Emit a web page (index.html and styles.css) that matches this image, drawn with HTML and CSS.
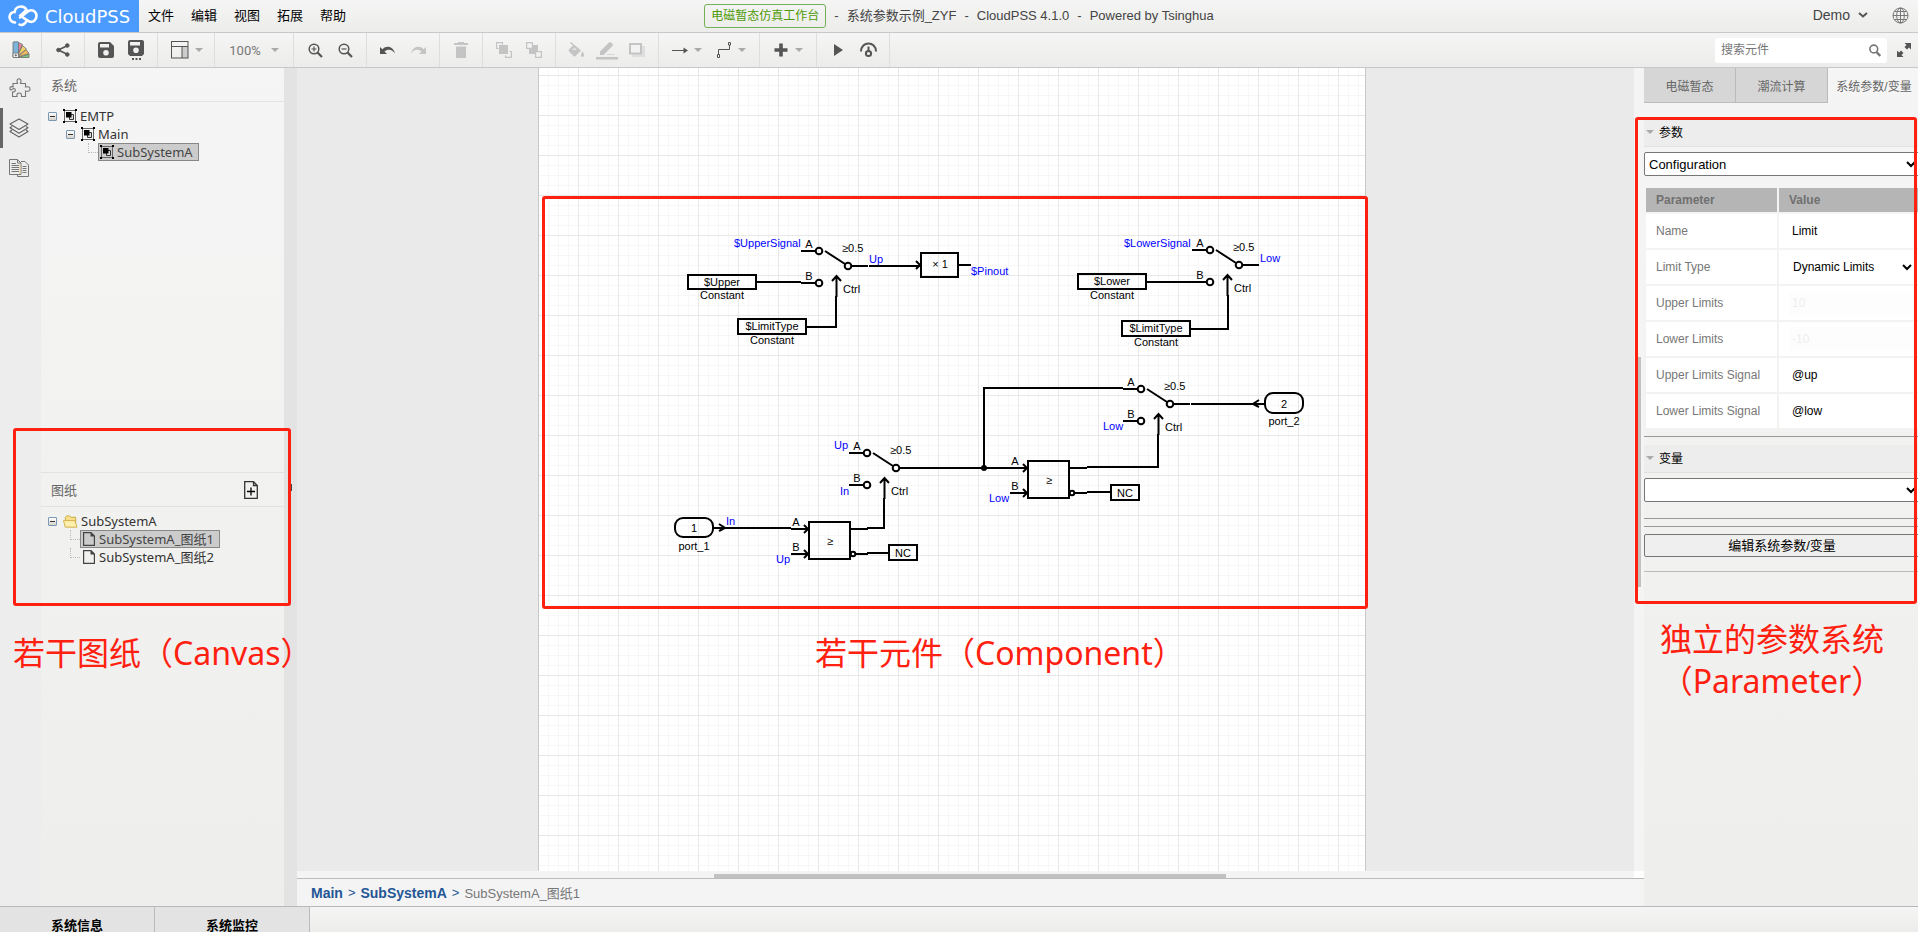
FILE: index.html
```html
<!DOCTYPE html>
<html lang="zh-CN">
<head>
<meta charset="utf-8">
<title>系统参数示例_ZYF - CloudPSS</title>
<link rel="stylesheet" href="styles.css">
</head>
<body>
<header class="titlebar">
  <div class="titlebar-left">
    <a class="logo" href="#">
      <svg width="30" height="22" viewBox="0 0 30 22" fill="none" stroke="#fff" stroke-width="2.6" stroke-linecap="round"><path d="M7 17.5C3.500 17.200 1.500 14.500 1.500 11.800C1.500 8.800 4 6.800 6.600 7C7 3.800 9.800 1.500 13 1.500C15.600 1.500 17.600 3 18.600 5L12.500 10.500L19 15.500C17 19.500 13.500 20.800 11.500 19.500"/><path d="M12 12.500L20.500 6C25 3.800 28.600 7.200 28.500 11C28.400 15 25 17.600 21.500 16.600L18.500 15"/></svg>
      <span>CloudPSS</span>
    </a>
    <nav class="menu">
      <button>文件</button><button>编辑</button><button>视图</button><button>拓展</button><button>帮助</button>
    </nav>
  </div>
  <div class="title">
    <span class="badge">电磁暂态仿真工作台</span>
    <span>-</span><span>系统参数示例_ZYF</span><span>-</span><span>CloudPSS 4.1.0</span><span>-</span><span>Powered by Tsinghua</span>
  </div>
  <div class="account">
    <button class="user">Demo
      <svg width="10" height="6" viewBox="0 0 10 6" fill="none" stroke="#555" stroke-width="2"><path d="M1 1L5 4.500L9 1"/></svg>
    </button>
    <button aria-label="语言">
      <svg width="17" height="17" viewBox="0 0 17 17" fill="none" stroke="#777" stroke-width="1"><circle cx="8.500" cy="8.500" r="7.500"/><ellipse cx="8.500" cy="8.500" rx="3.800" ry="7.500"/><path d="M8.500 1V16M1 8.500H16M2.500 4.500H14.500M2.500 12.500H14.500"/></svg>
    </button>
  </div>
</header>

<div class="toolbar">
  <div class="group">
    <button aria-label="主题"><svg width="18" height="18" viewBox="0 0 18 18" stroke="#6d6d6d" stroke-width=".8"><path d="M6 16.500L17 13V16.500Z" fill="#7fc77a"/><path d="M6 16L14 8.500L17 12.500Z" fill="#f3b95f"/><path d="M5.500 15L10.500 4.500L14.500 8Z" fill="#f2d06a"/><path d="M5.500 14V1L10.500 3.500Z" fill="#e8849b"/><rect x="1" y=".8" width="5.500" height="15.700" rx="1" fill="#7db4dc"/><path d="M1 12H6.500V16.500H1Z" fill="#eee"/><circle cx="3.800" cy="14.300" r=".7" fill="#555"/></svg></button>
  </div>
  <div class="group">
    <button aria-label="分享"><svg width="14" height="14" viewBox="0 0 14 14" fill="#555" stroke="#555"><path d="M11.500 2.500L2.500 7L11.500 11.500" fill="none" stroke-width="1.600"/><circle cx="11.300" cy="2.500" r="1.800"/><circle cx="2.500" cy="7" r="1.800"/><circle cx="11.300" cy="11.500" r="1.800"/></svg></button>
  </div>
  <div class="group">
    <button aria-label="保存"><svg width="16" height="16" viewBox="0 0 16 16"><path fill="#555" fill-rule="evenodd" d="M2 0H12L16 4V14Q16 16 14 16H2Q0 16 0 14V2Q0 0 2 0ZM2 2V5.500H11V2ZM8 8A2.800 2.800 0 1 0 8 13.600A2.800 2.800 0 1 0 8 8Z"/></svg></button>
    <button aria-label="另存为"><svg width="16" height="20" viewBox="0 0 16 20"><path fill="#555" fill-rule="evenodd" d="M2 0H14Q16 0 16 2V14L14 16H2L0 14V2Q0 0 2 0ZM2 2V5.500H12V2ZM8 7.500A2.800 2.800 0 1 0 8 13.100A2.800 2.800 0 1 0 8 7.500Z"/><path fill="#555" d="M4 18H6V20H4ZM7.500 18H9.500V20H7.500ZM11 18H13V20H11Z"/></svg></button>
  </div>
  <div class="group">
    <button class="drop" aria-label="布局"><svg width="18" height="18" viewBox="0 0 18 18" fill="none" stroke="#555"><path fill="#ccc" stroke="none" d="M11 6H17V17H11Z"/><rect x=".5" y=".5" width="16.500" height="16.500"/><path d="M1 5.500H17M11 5.500V17"/></svg><i class="caret"></i></button>
  </div>
  <div class="group">
    <button class="zoom">100%<i class="caret"></i></button>
  </div>
  <div class="group">
    <button aria-label="放大"><svg width="15" height="15" viewBox="0 0 15 15" fill="none" stroke="#555" stroke-width="1.500"><circle cx="6" cy="6" r="4.800"/><path d="M9.500 9.500L14 14" stroke-width="2.200"/><path d="M3.500 6H8.500M6 3.500V8.500" stroke-width="1.200"/></svg></button>
    <button aria-label="缩小"><svg width="15" height="15" viewBox="0 0 15 15" fill="none" stroke="#555" stroke-width="1.500"><circle cx="6" cy="6" r="4.800"/><path d="M9.500 9.500L14 14" stroke-width="2.200"/><path d="M3.500 6H8.500" stroke-width="1.200"/></svg></button>
  </div>
  <div class="group">
    <button aria-label="撤销"><svg width="16" height="9" viewBox="0 0 16 9"><path fill="#555" d="M0 1V8H7L4.500 5.500C8 2.500 12.500 3.500 15 7.500C13.500 1 7 -1.500 2.300 3.300Z"/></svg></button>
    <button aria-label="重做"><svg width="16" height="9" viewBox="0 0 16 9"><path fill="#c4c4c4" d="M16 1V8H9L11.500 5.500C8 2.500 3.500 3.500 1 7.500C2.500 1 9 -1.500 13.700 3.300Z"/></svg></button>
  </div>
  <div class="group">
    <button aria-label="删除"><svg width="14" height="16" viewBox="0 0 14 16" fill="#c4c4c4"><path d="M0 1H4V0H10V1H14V3H0ZM2 4.500H12V16H2Z"/></svg></button>
  </div>
  <div class="group">
    <button aria-label="置于顶层"><svg width="16" height="16" viewBox="0 0 16 16" fill="none" stroke="#c4c4c4" stroke-width="1.200"><path d="M2.500 6.500H.600V.600H6.500V2.500M13.500 9.500H15.400V15.400H9.500V13.500"/><path fill="#c4c4c4" stroke="none" d="M3 3H12V12H3Z"/></svg></button>
    <button aria-label="置于底层"><svg width="16" height="16" viewBox="0 0 16 16" stroke="#c4c4c4" stroke-width="1.200"><path fill="#c4c4c4" stroke="none" d="M3 3H12V12H3Z"/><path fill="#f2f2f2" d="M.600 .600H6.400V6.400H.600ZM9.600 9.600H15.400V15.400H9.600Z"/></svg></button>
  </div>
  <div class="group">
    <button aria-label="填充"><svg width="18" height="16" viewBox="0 0 18 16"><path fill="#c4c4c4" d="M3 0L13 8.500L7.500 14Q6.500 15 5.500 14L1 9.500Q0 8.500 1 7.500L5 3.500L2 1ZM14.500 9.500Q17 13 15.500 14.500Q14 15.500 13 14Q12.500 12.500 14.500 9.500Z"/><path d="M4 8L6.500 5.500L9 8Z" fill="#e4e4e4"/></svg></button>
    <button aria-label="线条颜色"><svg width="22" height="19" viewBox="0 0 22 19" fill="#c4c4c4"><path d="M4 10.500L13 1.500Q14 .5 15 1.500L16.500 3Q17.500 4 16.500 5L7.500 14H4Z"/><path opacity=".6" d="M11 13H18V14H11Z"/><path d="M0 16H22V18.500H0Z"/></svg></button>
    <button aria-label="阴影"><svg width="16" height="14" viewBox="0 0 16 14"><path fill="#dedede" d="M3 3H16V14H3Z"/><rect x="1" y="1" width="11" height="9.500" fill="#f2f2f2" stroke="#c4c4c4" stroke-width="2"/></svg></button>
  </div>
  <div class="group">
    <button class="drop" aria-label="连接"><svg width="16" height="7" viewBox="0 0 16 7"><path stroke="#555" d="M0 3.500H14"/><path fill="#555" d="M11.500 .5L16 3.500L11.500 6.500Z"/></svg><i class="caret"></i></button>
    <button class="drop" aria-label="航点"><svg width="16" height="16" viewBox="0 0 16 16" fill="none" stroke="#555"><path d="M2.500 13V7.500H13.500V3M1.500 12.500H3.500V15.500H1.500ZM12.500 .5H14.500V3H12.500Z"/></svg><i class="caret"></i></button>
  </div>
  <div class="group">
    <button class="drop" aria-label="插入"><svg width="16" height="14" viewBox="-1 0 16 14" fill="#555"><path d="M5.200 0.500H8.800V5.200H13.500V8.800H8.800V13.500H5.200V8.800H.5V5.200H5.200Z"/></svg><i class="caret"></i></button>
  </div>
  <div class="group">
    <button aria-label="运行"><svg width="9" height="12" viewBox="0 0 9 12"><path fill="#555" d="M0 0L9 6L0 12Z"/></svg></button>
    <button aria-label="监控"><svg width="17" height="16" viewBox="0 0 17 16" fill="none" stroke="#555" stroke-width="2"><path d="M1 9.500C1 -1.300 16 -1.300 16 9.500"/><circle cx="8.500" cy="11.500" r="2.600"/><path d="M8.500 4.500V9"/></svg></button>
  </div>
  <div class="search-wrap">
    <label class="search"><input type="text" placeholder="搜索元件" aria-label="搜索元件"><svg width="12" height="13" viewBox="0 0 12 13" fill="none" stroke="#777" stroke-width="1.600"><circle cx="4.800" cy="5" r="3.900"/><path d="M7.500 8L11.200 12" stroke-width="2.400"/></svg></label>
    <button class="expand" aria-label="全屏"><svg width="14" height="14" viewBox="0 0 14 14" fill="#555"><path d="M7.500 0H14V6.500L12 4.500L10 6.500L7.500 4L9.500 2ZM0 7.500L2 9.500L4 7.500L6.500 10L4.500 12L6.500 14H0Z"/></svg></button>
  </div>
</div>

<main class="main">
  <nav class="rail">
    <button aria-label="元件"><svg width="22" height="20" viewBox="0 0 22 20" fill="none" stroke="#777" stroke-width="1.100"><path d="M4 5.500H8.500Q7 1 10 .800Q13 1 11.500 5.500H16.500V9Q21 8 21 11Q21 14 16.500 13V18.500H12.500Q13 15 10 15Q7.500 15 8 18.500H3.500V14Q4 13.800 5 14Q7 13 6 11Q4 10 2.500 12Q.5 12 1 9.500Q2 8 4 9Z"/></svg></button>
    <button class="active" aria-label="图层"><svg width="20" height="20" viewBox="0 0 20 20" fill="none" stroke="#666" stroke-width="1.200" stroke-linejoin="round"><path d="M10 1L19 6L10 11.500L1 6ZM3 8.500L1 9.800L10 15.200L19 9.800L17 8.500M3 12L1 13.500L10 19L19 13.500L17 12"/></svg></button>
    <button aria-label="图纸"><svg width="20" height="18" viewBox="0 0 20 18" fill="none" stroke="#777"><path d="M.5 .5H8.500L12 4V15.500H.5ZM8.500 .5V4H12"/><path d="M12 2.500H16L19.500 6V17.500H8.500V15.500"/><path d="M2.500 4.500H7M2.500 6.500H10M2.500 8.500H10M2.500 10.500H10M2.500 12.500H10M13.500 7.500H17.500M13.500 9.500H17.500M13.500 11.500H17.500M13.500 13.500H17.500"/><path stroke="#e5c58e" d="M11 5V15"/></svg></button>
  </nav>

  <aside class="side">
    <section>
      <h2>系统</h2>
      <ul class="tree">
        <li><div class="row"><button class="toggle" aria-label="折叠"></button><span class="node"><svg class="sys" viewBox="0 0 14 14"><use href="#sys"/></svg>EMTP</span></div>
          <ul>
            <li><div class="row"><button class="toggle" aria-label="折叠"></button><span class="node"><svg class="sys" viewBox="0 0 14 14"><use href="#sys"/></svg>Main</span></div>
              <ul><li><div class="row"><span class="elbow"></span><span class="node selected"><svg class="sys" viewBox="0 0 14 14"><use href="#sys"/></svg>SubSystemA</span></div></li></ul>
            </li>
          </ul>
        </li>
      </ul>
    </section>
    <section>
      <h2>图纸 <button aria-label="新建图纸"><svg width="14" height="18" viewBox="0 0 14 18" fill="none" stroke="#333" stroke-width="1.300"><path d="M.700 .700H9.500L13.300 4.500V17.300H.700ZM9.500 .700V4.500H13.300"/><path stroke="#000" d="M3 10.500H11M7 6.500V14.500"/></svg></button></h2>
      <ul class="tree">
        <li><div class="row"><button class="toggle" aria-label="折叠"></button><span class="node"><svg width="15" height="13" viewBox="0 0 16 13"><path fill="#f7e08a" stroke="#cba63b" d="M2.500 12V2L4 .5H7L8.500 2H13.500V12Z"/><path fill="#fdf0ae" stroke="#d3b04a" d="M.5 5.500H12.500L15 12.500H2.500Z"/></svg>SubSystemA</span></div>
          <ul>
            <li><div class="row"><span class="elbow"></span><span class="node selected sheet"><svg width="12" height="14" viewBox="0 0 12 14"><use href="#doc"/></svg>SubSystemA_图纸1</span></div></li>
            <li><div class="row"><span class="elbow"></span><span class="node sheet"><svg width="12" height="14" viewBox="0 0 12 14"><use href="#doc"/></svg>SubSystemA_图纸2</span></div></li>
          </ul>
        </li>
      </ul>
    </section>
  </aside>

  <div class="gutter"></div>

  <div class="workspace">
    <div class="viewport">
      <div class="stage">
        <div class="sheet-page">
          <svg class="diagram" width="828" height="560" viewBox="538 68 828 560">
            <defs>
              <g id="sys"><path fill="none" stroke="#666" d="M1.500 1.500H12.500V12.500H1.500Z"/><path d="M0 0H2V2H0ZM12 0H14V2H12ZM0 12H2V14H0ZM12 12H14V14H12Z"/><path fill="#ddd" stroke="#333" d="M6.500 5.500H10.500V10.500H6.500Z"/><path d="M3 3H8.500V8.500H3Z"/></g>
              <g id="doc"><path fill="none" stroke="#444" stroke-width="1.200" d="M.600 .600H8L11.400 4V13.400H.600Z"/><path fill="#444" d="M7.500 0L12 4.500H7.500Z"/></g>
              <g id="switch">
                <path d="M0 0H15M0 32H15M51 15H67M24 0L44 13M35.500 46V26M31 30L35.500 25L40 30"/>
                <circle cx="18" cy="0" r="3.300"/><circle cx="18" cy="32" r="3.300"/><circle cx="47" cy="15" r="3.300"/>
                <g class="pin"><text x="8" y="-3" class="mid">A</text><text x="8" y="29" class="mid">B</text><text x="41" y="1">≥0.5</text><text x="42" y="42">Ctrl</text></g>
              </g>
              <g id="compare">
                <path d="M18 -7H59V30H18ZM0 0H17M13 -4L17 0L13 4M0 25H17M13 21L17 25L13 29M59 0H77M65 25H77"/>
                <circle cx="62" cy="25" r="2.300"/>
                <g class="pin"><text x="5" y="-3" class="mid">A</text><text x="5" y="22" class="mid">B</text><text x="39" y="16" class="mid">≥</text></g>
              </g>
            </defs>
            <g class="wire">
              <use href="#switch" x="801" y="251"/><use href="#switch" x="1192" y="250"/><use href="#switch" x="1123" y="389"/><use href="#switch" x="849" y="453"/>
              <use href="#compare" x="1010" y="468"/><use href="#compare" x="791" y="529"/>
              <rect x="688" y="275" width="68" height="14"/><rect x="738" y="319" width="68" height="15"/>
              <rect x="921" y="253" width="37" height="24"/>
              <rect x="1078" y="274" width="68" height="15"/><rect x="1122" y="321" width="68" height="15"/>
              <rect x="1265" y="393" width="38" height="20" rx="8"/><rect x="675" y="518" width="38" height="19" rx="8"/>
              <rect x="1111" y="485" width="28" height="15"/><rect x="889" y="545" width="28" height="15"/>
              <path d="M757 282H801M807 327H836V296M869 266H920M916 261L920 265L916 269M959 265H971"/>
              <path d="M1147 282H1192M1191 329H1228V295"/>
              <path d="M1191 404H1264M1259 400L1253 404L1259 407"/>
              <path d="M916 468H1010M984 468V388H1123M1087 467H1158V434M1087 492H1110"/>
              <path d="M714 528H791M719 524L725 528L719 531M867 528H884V498M867 553H888"/>
            </g>
            <circle cx="984" cy="468" r="3"/>
            <g class="mid">
              <text x="722" y="286">$Upper</text><text x="722" y="299">Constant</text>
              <text x="772" y="330">$LimitType</text><text x="772" y="344">Constant</text>
              <text x="940" y="268">× 1</text>
              <text x="1112" y="285">$Lower</text><text x="1112" y="299">Constant</text>
              <text x="1156" y="332">$LimitType</text><text x="1156" y="346">Constant</text>
              <text x="1284" y="408">2</text><text x="1284" y="425">port_2</text>
              <text x="694" y="532">1</text><text x="694" y="550">port_1</text>
              <text x="1125" y="497">NC</text><text x="903" y="557">NC</text>
            </g>
            <g class="sig">
              <text x="734" y="247">$UpperSignal</text><text x="869" y="263">Up</text><text x="971" y="275">$Pinout</text>
              <text x="1124" y="247">$LowerSignal</text><text x="1260" y="262">Low</text><text x="1103" y="430">Low</text>
              <text x="834" y="449">Up</text><text x="840" y="495">In</text><text x="989" y="502">Low</text>
              <text x="726" y="525">In</text><text x="776" y="563">Up</text>
            </g>
          </svg>
          <div class="mark mark-diagram"></div>
          <p class="note note-diagram">若干元件（Component）</p>
        </div>
      </div>
      <div class="vscroll"></div>
    </div>
    <div class="hscroll"></div>
    <nav class="crumbs"><a href="#">Main</a><span>&gt;</span><a href="#">SubSystemA</a><span>&gt;</span><em>SubSystemA_图纸1</em></nav>
  </div>

  <aside class="params">
    <div class="tabs"><button>电磁暂态</button><button>潮流计算</button><button class="on">系统参数/变量</button></div>
    <div class="params-body">
      <h3><i class="caret"></i>参数</h3>
      <select class="picker" aria-label="参数"><option>Configuration</option></select>
      <table>
        <thead><tr><th>Parameter</th><th>Value</th></tr></thead>
        <tbody>
          <tr><td><label for="p1">Name</label></td><td><input id="p1" value="Limit"></td></tr>
          <tr><td><label for="p2">Limit Type</label></td><td><select id="p2"><option>Dynamic Limits</option></select></td></tr>
          <tr><td><label for="p3">Upper Limits</label></td><td><input id="p3" value="10" disabled></td></tr>
          <tr><td><label for="p4">Lower Limits</label></td><td><input id="p4" value="-10" disabled></td></tr>
          <tr><td><label for="p5">Upper Limits Signal</label></td><td><input id="p5" value="@up"></td></tr>
          <tr><td><label for="p6">Lower Limits Signal</label></td><td><input id="p6" value="@low"></td></tr>
        </tbody>
      </table>
      <hr>
      <h3><i class="caret"></i>变量</h3>
      <select class="picker" aria-label="变量"><option></option></select>
      <hr class="spaced">
      <hr>
      <button class="edit">编辑系统参数/变量</button>
      <hr class="last">
    </div>
  </aside>

  <div class="mark mark-canvas"></div>
  <p class="note note-canvas">若干图纸（Canvas）</p>
  <div class="mark mark-params"></div>
  <p class="note note-params">独立的参数系统<br>（Parameter）</p>
</main>

<footer class="dock"><button>系统信息</button><button>系统监控</button></footer>
</body>
</html>
```

FILE: styles.css
```css
* { box-sizing: border-box; }
body {
  margin: 0; height: 100vh; overflow: hidden;
  display: flex; flex-direction: column;
  font: 13px "Liberation Sans", "Noto Sans CJK SC", sans-serif;
  color: #444; background: #eee;
}
button { font: inherit; color: inherit; background: none; border: 0; padding: 0; }
svg { display: block; flex: none; }
ul { list-style: none; margin: 0; padding: 0; }
h2, h3, p { margin: 0; font-weight: normal; }

/* title bar */
.titlebar {
  flex: none; height: 33px; display: grid; grid-template-columns: 1fr auto 1fr;
  background: linear-gradient(#f5f5f5, #ececea); border-bottom: 1px solid #c8c8c8;
}
.titlebar-left, .menu, .title, .account { display: flex; align-items: center; }
.logo {
  width: 139px; height: 32px; padding-left: 8px; display: flex; align-items: center; gap: 7px;
  background: #4b9bff; color: #fff; text-decoration: none; font: 18px "DejaVu Sans", sans-serif;
}
.menu { gap: 17px; padding: 0 0 3px 9px; color: #000; }
.title { gap: 8px; }
.title span { line-height: 24px; }
.title .badge {
  font-size: 12px; line-height: 22px; padding: 0 6px; color: #4f9a06;
  border: 1px solid #76b054; border-radius: 3px;
}
.account { justify-content: flex-end; gap: 24px; padding: 0 9px 2px 0; }
.user { display: flex; align-items: center; gap: 8px; font-size: 14px; color: #444; }

/* toolbar */
.toolbar {
  flex: none; height: 35px; display: flex;
  background: linear-gradient(#f5f5f5, #ececea); border-bottom: 1px solid #c8c8c8;
}
.group { display: flex; align-items: center; padding: 0 6px; border-right: 1px solid #dedede; }
.group:first-child { padding-right: 5px; }
.group button { width: 30px; height: 34px; display: flex; align-items: center; justify-content: center; }
.group .drop { width: 44px; justify-content: flex-start; gap: 6px; padding-left: 7px; }
.group .zoom { width: 66px; gap: 10px; font: 13px Roboto, sans-serif; color: #777; }
.caret { border: 4px solid transparent; border-top-color: #aaa; border-bottom: 0; }
.search-wrap { margin-left: auto; display: flex; align-items: center; gap: 10px; padding-right: 7px; }
.search {
  width: 172px; height: 25px; display: flex; align-items: center; padding: 0 6px;
  background: #fff; border-radius: 3px;
}
.search input { flex: 1; min-width: 0; border: 0; padding: 0; outline: 0; background: none; font: inherit; font-size: 12px; }

/* main area */
.main { flex: 1; min-height: 0; position: relative; display: grid; grid-template-columns: 41px 243px 13px 1fr 274px; }
.rail { background: #ededed; }
.rail button { width: 41px; height: 40px; display: flex; align-items: center; padding-left: 9px; }
.rail .active { border-left: 3px solid #666; padding-left: 6px; }
.side { display: grid; grid-template-rows: 202fr 217fr; background: linear-gradient(#f5f5f5, #eeeeec); }
.side h2 {
  height: 34px; display: flex; align-items: center; justify-content: space-between;
  padding: 0 26px 0 10px; font-size: 13px; color: #666; border-bottom: 1px solid #e2e2e2;
}
.side section + section { border-top: 1px solid #e2e2e2; }
.gutter { background: linear-gradient(#444, #444) 7px 50% / 1px 7px no-repeat, #e3e3e3; }

.tree { padding: 5px 0 0 7px; font: 13px "Noto Sans", "Noto Sans CJK SC", sans-serif; color: #333; }
.tree ul { padding-left: 18px; }
.row { height: 18px; display: flex; align-items: center; }
.toggle {
  width: 9px; height: 9px; margin-right: 5px; border: 1px solid #7898b5; border-radius: 1px;
  background: linear-gradient(#333, #333) center / 5px 1px no-repeat, linear-gradient(#fff, #d8d3c8);
}
.elbow { width: 10px; height: 10px; margin: -9px 0 0 4px; border: dotted #bbb; border-width: 0 0 1px 1px; }
.node { height: 18px; display: flex; align-items: center; gap: 3px; border: 1px solid transparent; padding-right: 5px; line-height: 16px; }
.node.selected { background: #ccc; border-color: #888; padding-left: 1px; color: #444; }
.node.sheet { padding-left: 2px; gap: 4px; }
.sys { width: 14px; height: 14px; }

/* drawing area */
.workspace { min-width: 0; display: flex; flex-direction: column; background: #f4f4f4; }
.viewport { flex: 1; min-height: 0; display: flex; }
.stage { flex: 1; min-width: 0; padding-left: 241px; background: #eaeaea; overflow: hidden; }
.sheet-page {
  width: 828px; height: 100%; position: relative;
  border: solid #c8c8c8; border-width: 0 1px;
  background-color: #fff; background-origin: border-box;
  background-image: linear-gradient(90deg, #e8e8e8 1px, transparent 1px), linear-gradient(#e8e8e8 1px, transparent 1px),
    linear-gradient(90deg, #f7f7f7 1px, transparent 1px), linear-gradient(#f7f7f7 1px, transparent 1px);
  background-size: 40px 40px, 40px 40px, 10px 10px, 10px 10px;
  background-position: 0 7px;
}
.diagram { margin-left: -1px; font-size: 11px; }
.wire { fill: none; stroke: #000; stroke-width: 2; }
.pin { fill: #000; stroke: none; }
.mid { text-anchor: middle; }
.sig { fill: #00f; }
.vscroll { width: 10px; background: linear-gradient(#c1c1c1, #c1c1c1) 3px 289px / 4px 230px no-repeat, #f4f4f4; }
.hscroll {
  flex: none; height: 7px;
  background: linear-gradient(#c1c1c1, #c1c1c1) 417px 3px / 512px 4px no-repeat, linear-gradient(#fff, #fff) right / 10px 7px no-repeat, #f4f4f4;
}
.crumbs {
  flex: none; height: 28px; display: flex; align-items: center; gap: 5px; padding-left: 14px;
  border-top: 1px solid #bbb; background: #f4f4f4; color: #235695;
}
.crumbs a { font-size: 14px; font-weight: bold; color: #235695; text-decoration: none; }
.crumbs em { font-style: normal; color: #777; }

/* parameter panel */
.params { overflow: hidden; background: linear-gradient(#f5f5f5, #eeeeec); font-size: 12px; }
.tabs { display: flex; height: 35px; margin-bottom: 16px; color: #666; white-space: nowrap; }
.tabs button { flex: none; width: 92px; background: #d6d6d6; border: solid #bbb; border-width: 0 1px 1px 0; }
.tabs .on { background: none; border: 0; }
.params-body { width: 276px; }
.params h3 {
  height: 28px; display: flex; align-items: center; gap: 5px; padding: 0 0 2px 2px; margin-bottom: 5px;
  font-size: 12px; color: #000; background: #ededed; border-bottom: 1px solid #e2e2e2;
}
.params select, .params input { font: inherit; color: #000; }
.picker { display: block; width: 100%; height: 24px; border: 1px solid #767676; border-radius: 2px; background: #fff; }
.params .picker { font-size: 13px; }
table { width: 100%; margin-top: 10px; border-spacing: 2px; table-layout: fixed; }
th { height: 24px; padding: 0 10px; text-align: left; color: #707070; background: #b5b5b5; }
th:first-child { width: 131px; }
td { height: 34px; padding: 0 10px; background: #fff; color: #777; }
td:last-child { padding-right: 3px; }
td input, td select { width: 100%; height: 24px; border: 0; background: #fff; }
td input { padding: 0 3px; }
td select { padding: 0; }
.params td input:disabled { color: #eee; background: #fdfdfd; }
hr { height: 1px; margin: 7px 0; border: 0; background: #999; }
table + hr { margin-top: 6px; }
hr + h3 { margin-top: 8px; }
.spaced { margin-top: 16px; }
.edit {
  display: block; width: 100%; height: 23px; border: 1px solid #767676; border-radius: 2px;
  background: #efefef; color: #000; font-size: 13px; line-height: 18px;
}
.last { margin-top: 14px; background: #bbb; }

/* red annotations laid over the interface */
.mark { position: absolute; border: 3px solid #ff2010; border-radius: 3px; pointer-events: none; }
.note {
  position: absolute; color: #ff2010; white-space: nowrap;
  font: 32px/42px "Noto Sans", "Noto Sans CJK SC", sans-serif;
}
.mark-canvas { left: 13px; top: 360px; width: 278px; height: 178px; }
.note-canvas { left: 13px; top: 564px; }
.mark-diagram { left: 3px; top: 128px; width: 826px; height: 413px; }
.note-diagram { left: 276px; top: 564px; }
.mark-params { right: 1px; top: 49px; width: 282px; height: 487px; }
.note-params { right: 34px; top: 550px; text-align: center; }

/* bottom dock */
.dock {
  flex: none; height: 26px; display: flex; overflow: hidden;
  border-top: 1px solid #b8b8b8; background: linear-gradient(#f5f5f5, #ececea);
}
.dock button { width: 155px; height: 34px; font-weight: bold; color: #000; background: #e3e3e3; border-right: 1px solid #bbb; }
```
